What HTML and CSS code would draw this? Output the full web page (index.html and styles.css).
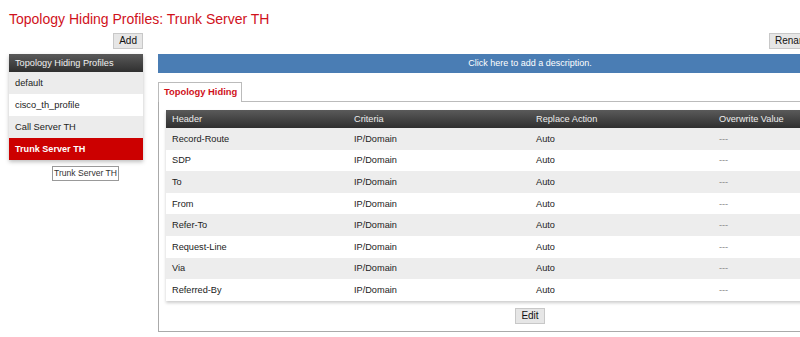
FILE: index.html
```html
<!DOCTYPE html>
<html lang="en">
<head>
    <meta charset="UTF-8">
    <title>Topology Hiding Profiles</title>
    <link rel="stylesheet" href="styles.css">
</head>
<body>
    <div class="page">
        <h1>Topology Hiding Profiles: Trunk Server TH</h1>

        <div class="layout">
            <div class="sidebar">
                <div class="toolbar">
                    <button class="btn">Add</button>
                </div>
                <div class="profiles">
                    <div class="profiles-head">Topology Hiding Profiles</div>
                    <div class="profile odd">default</div>
                    <div class="profile">cisco_th_profile</div>
                    <div class="profile odd">Call Server TH</div>
                    <div class="profile active">Trunk Server TH</div>
                </div>
                <div class="tip">Trunk Server TH</div>
            </div>

            <div class="main">
                <div class="toolbar main-tools">
                    <button class="btn">Rename</button>
                </div>
                <div class="desc">Click here to add a description.</div>

                <div class="tabs">
                    <div class="tab">Topology Hiding</div>
                </div>
                <div class="panel">
                    <div class="grid">
                        <div class="row head">
                            <div>Header</div><div>Criteria</div><div>Replace Action</div><div>Overwrite Value</div>
                        </div>
                        <div class="row odd"><div>Record-Route</div><div>IP/Domain</div><div>Auto</div><div class="dash">---</div></div>
                        <div class="row"><div>SDP</div><div>IP/Domain</div><div>Auto</div><div class="dash">---</div></div>
                        <div class="row odd"><div>To</div><div>IP/Domain</div><div>Auto</div><div class="dash">---</div></div>
                        <div class="row"><div>From</div><div>IP/Domain</div><div>Auto</div><div class="dash">---</div></div>
                        <div class="row odd"><div>Refer-To</div><div>IP/Domain</div><div>Auto</div><div class="dash">---</div></div>
                        <div class="row"><div>Request-Line</div><div>IP/Domain</div><div>Auto</div><div class="dash">---</div></div>
                        <div class="row odd"><div>Via</div><div>IP/Domain</div><div>Auto</div><div class="dash">---</div></div>
                        <div class="row"><div>Referred-By</div><div>IP/Domain</div><div>Auto</div><div class="dash">---</div></div>
                    </div>
                    <div class="actions">
                        <button class="btn">Edit</button>
                    </div>
                </div>
            </div>
        </div>
    </div>
</body>
</html>
```

FILE: styles.css
```css
body {
    margin: 0;
    overflow: hidden;
    font-family: "Liberation Sans", Arial, sans-serif;
    background: #fff;
    color: #222;
}
.page {
    width: 893px;
    padding: 0 0 0 9px;
}
h1 {
    margin: 0;
    padding-top: 11px;
    height: 22px;
    font-size: 14px;
    line-height: 17px;
    font-weight: normal;
    color: #d0111b;
}
.layout {
    display: flex;
    gap: 15px;
}
.sidebar {
    width: 134px;
    flex: none;
}
.main {
    flex: 1;
}
.toolbar {
    display: flex;
    justify-content: flex-end;
    height: 21px;
}
.main-tools {
    justify-content: flex-start;
    padding-left: 611px;
}
.btn {
    font-family: "Liberation Sans", Arial, sans-serif;
    font-size: 10px;
    color: #111;
    background: #e6e6e6;
    border: 1px solid #c8c8c8;
    height: 16px;
    padding: 0 5px;
    line-height: 14px;
    white-space: nowrap;
}
.profiles {
    box-shadow: 0 2px 4px rgba(0,0,0,0.25);
}
.profiles-head {
    height: 18px;
    line-height: 18px;
    padding-left: 6px;
    font-size: 9.2px;
    color: #f0f0f0;
    background: linear-gradient(#5a5a5a, #2f2f2f);
}
.profile {
    height: 22px;
    line-height: 22px;
    padding-left: 6px;
    font-size: 9.3px;
    background: #fff;
}
.profile.odd {
    background: #ececec;
}
.profile.active {
    background: #cc0000;
    color: #fff;
    font-weight: bold;
    font-size: 9.1px;
}
.tip {
    margin: 6px 0 0 43px;
    width: 67px;
    box-sizing: border-box;
    height: 15px;
    line-height: 13px;
    border: 1px solid #999;
    font-size: 8.6px;
    text-align: center;
    color: #333;
    white-space: nowrap;
}
.desc {
    height: 19px;
    line-height: 19px;
    background: #4a7db4;
    color: #fff;
    font-size: 9px;
    text-align: center;
}
.tabs {
    margin-top: 9px;
    height: 19px;
    display: flex;
}
.tab {
    border: 1px solid #bbb;
    border-bottom: none;
    background: #fff;
    color: #d0111b;
    font-weight: bold;
    font-size: 9.4px;
    padding: 0 4px 0 5px;
    line-height: 18px;
    height: 19px;
    position: relative;
    z-index: 1;
    white-space: nowrap;
}
.panel {
    border: 1px solid #aaa;
    border-top-color: #bbb;
    height: 221px;
    padding: 8px 7px 0 7px;
}
.grid {
    box-shadow: 0 2px 3px rgba(0,0,0,0.2);
}
.row {
    display: grid;
    grid-template-columns: 182px 182px 183px 1fr;
    height: 21.6px;
    align-items: center;
    font-size: 9.2px;
    background: #fff;
}
.row > div {
    padding-left: 6px;
}
.row.odd {
    background: #ededed;
}
.row.head {
    height: 18px;
    background: linear-gradient(#5a5a5a, #2f2f2f);
    color: #eee;
}
.dash {
    color: #888;
}
.actions {
    display: flex;
    justify-content: center;
    padding-top: 7px;
}
```
